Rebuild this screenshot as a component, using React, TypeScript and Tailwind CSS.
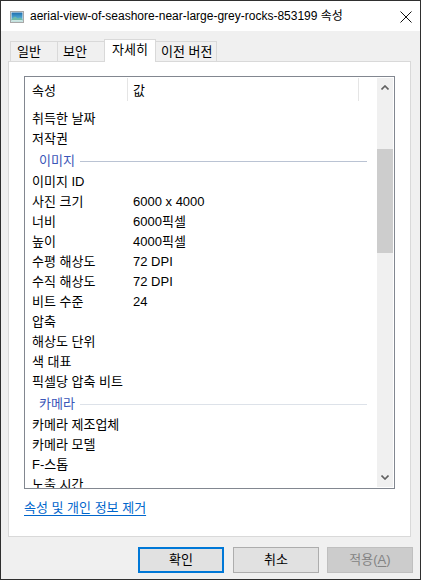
import React from "react";

type Row = { k: string; v?: string; group?: boolean; line?: string };

const rows: Row[] = [
  { k: "취득한 날짜" },
  { k: "저작권" },
  { k: "이미지", group: true, line: "bg-[#bac3d3]" },
  { k: "이미지 ID" },
  { k: "사진 크기", v: "6000 x 4000" },
  { k: "너비", v: "6000픽셀" },
  { k: "높이", v: "4000픽셀" },
  { k: "수평 해상도", v: "72 DPI" },
  { k: "수직 해상도", v: "72 DPI" },
  { k: "비트 수준", v: "24" },
  { k: "압축" },
  { k: "해상도 단위" },
  { k: "색 대표" },
  { k: "픽셀당 압축 비트" },
  { k: "카메라", group: true, line: "bg-[#dde2e9]" },
  { k: "카메라 제조업체" },
  { k: "카메라 모델" },
  { k: "F-스톱" },
  { k: "노출 시간" },
];

function ImgIcon() {
  return (
    <svg width="14" height="12" viewBox="0 0 14 12">
      <defs>
        <linearGradient id="sky" x1="0" y1="0" x2="0" y2="1">
          <stop offset="0" stopColor="#1f6fae" />
          <stop offset="0.6" stopColor="#4fa6d3" />
          <stop offset="1" stopColor="#9fd3e6" />
        </linearGradient>
      </defs>
      <rect x="0.5" y="0.5" width="13" height="11" fill="#f4f4f4" stroke="#a8a8a8" />
      <rect x="1.5" y="1.5" width="11" height="9" fill="url(#sky)" />
      <path d="M1.5 8 L5 5.5 L8 7.5 L10 6.5 L12.5 8 L12.5 10.5 L1.5 10.5 Z" fill="#6fb9a8" />
      <path d="M1.5 9.2 L12.5 9.2 L12.5 10.5 L1.5 10.5 Z" fill="#e8f2f2" />
    </svg>
  );
}

export default function App() {
  const font = "font-['Liberation_Sans','Noto_Sans_CJK_KR',sans-serif]";
  return (
    <div className={`w-[421px] h-[580px] box-border border border-[#2f2f2f] bg-[#f0f0f0] flex flex-col text-[13px] text-black ${font}`}>
      {/* title bar */}
      <div className="h-[30px] bg-white flex items-center shrink-0">
        <div className="ml-[9px] mt-[2px] flex items-center">
          <ImgIcon />
        </div>
        <div className="ml-[6px] text-[12px] leading-[16px] whitespace-nowrap">
          aerial-view-of-seashore-near-large-grey-rocks-853199 속성
        </div>
        <div className="flex-1" />
        <svg width="12" height="12" viewBox="0 0 12 12" className="mr-[8px] mt-[2px]">
          <path d="M0.5 0.5 L11.5 11.5 M11.5 0.5 L0.5 11.5" stroke="#111" strokeWidth="1" fill="none" />
        </svg>
      </div>

      {/* tabs */}
      <div className="mt-[8px] ml-[9px] h-[22px] flex items-end shrink-0">
        <div className="w-[47px] h-[20px] border-t border-l border-[#d9d9d9] bg-[#f0f0f0] pl-[6px] leading-[19px]">일반</div>
        <div className="w-[47px] h-[20px] border-t border-l border-[#d9d9d9] bg-[#f0f0f0] pl-[5px] leading-[19px]">보안</div>
        <div className="relative z-10 -mb-px w-[52px] h-[23px] border-t border-l border-r border-[#d9d9d9] bg-white pl-[7px] leading-[20px]">자세히</div>
        <div className="w-[61px] h-[20px] border-t border-r border-[#d9d9d9] bg-[#f0f0f0] pl-[5px] leading-[19px] whitespace-nowrap">이전 버전</div>
      </div>

      {/* panel */}
      <div className="ml-[7px] w-[403px] h-[476px] border border-[#d9d9d9] bg-white flex flex-col shrink-0">
        <div className="ml-[15px] mt-[14px] w-[371px] h-[413px] border border-[#828790] bg-white flex overflow-hidden">
          <div className="flex-1 flex flex-col overflow-hidden">
            {/* header */}
            <div className="h-[25px] flex shrink-0 items-stretch">
              <div className="w-[102px] pl-[7px] flex items-center">
                <span className="leading-[16px] mt-[3px]">속성</span>
              </div>
              <div className="w-px my-[1px] bg-[#e5e5e5]" />
              <div className="w-[230px] pl-[5px] flex items-center">
                <span className="leading-[16px] mt-[3px]">값</span>
              </div>
              <div className="w-px my-[1px] bg-[#e5e5e5]" />
            </div>
            <div className="h-[7px] shrink-0" />
            {rows.map((r, i) =>
              r.group ? (
                <div key={i} className="h-[23px] flex items-center shrink-0 pt-[1px] pr-[10px]">
                  <span className="pl-[14px] leading-[20px] text-[#3a55b8] whitespace-nowrap">{r.k}</span>
                  <div className={`flex-1 h-px ml-[5px] ${r.line}`} />
                </div>
              ) : (
                <div key={i} className="h-[20px] flex shrink-0 leading-[20px] whitespace-nowrap">
                  <div className="w-[108px] pl-[7px]">{r.k}</div>
                  <div>{r.v ?? ""}</div>
                </div>
              )
            )}
          </div>
          {/* scrollbar */}
          <div className="w-[16px] mr-px my-px bg-[#f0f0f0] flex flex-col shrink-0">
            <div className="h-[17px] flex items-center justify-center">
              <svg width="8" height="5" viewBox="0 0 8 5" className="mt-[1px]">
                <path d="M0.5 4.5 L4 1 L7.5 4.5" stroke="#606060" strokeWidth="1.6" fill="none" />
              </svg>
            </div>
            <div className="h-[54px]" />
            <div className="h-[104px] bg-[#cdcdcd]" />
            <div className="flex-1" />
            <div className="h-[17px] flex items-center justify-center">
              <svg width="8" height="5" viewBox="0 0 8 5" className="mb-[2px]">
                <path d="M0.5 0.5 L4 4 L7.5 0.5" stroke="#606060" strokeWidth="1.6" fill="none" />
              </svg>
            </div>
          </div>
        </div>
        <div className="ml-[15px] mt-[11px] leading-[16px]">
          <span className="text-[#0066cc] underline underline-offset-[3px] decoration-[#0066cc]">속성 및 개인 정보 제거</span>
        </div>
      </div>

      {/* buttons */}
      <div className="mt-[10px] flex justify-end pr-[7px] shrink-0">
        <div className="w-[86px] h-[26px] box-border border-2 border-[#0078d7] bg-[#e1e1e1] flex items-center justify-center leading-[16px]">확인</div>
        <div className="ml-[9px] w-[86px] h-[26px] box-border border border-[#adadad] bg-[#e1e1e1] flex items-center justify-center leading-[16px]">취소</div>
        <div className="ml-[8px] w-[86px] h-[26px] box-border border border-[#bfbfbf] bg-[#cccccc] flex items-center justify-center leading-[16px] text-[#838383]">
          적용(<span className="underline underline-offset-[2px]">A</span>)
        </div>
      </div>
    </div>
  );
}
